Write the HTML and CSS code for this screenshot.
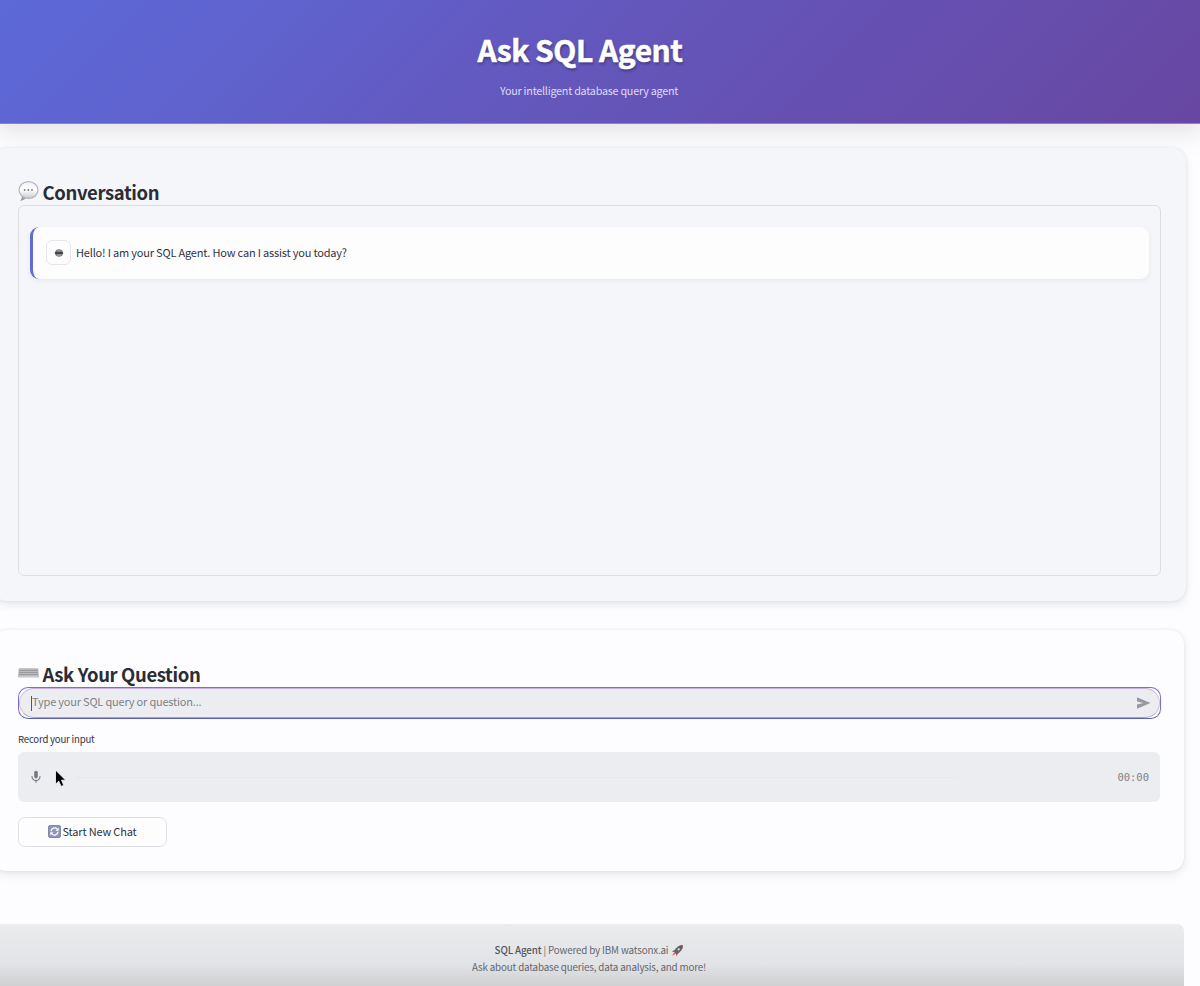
FILE: index.html
```html
<!DOCTYPE html>
<html lang="en">
<head>
<meta charset="utf-8">
<title>Ask SQL Agent</title>
<link rel="stylesheet" href="styles.css">
</head>
<body>
<header class="hero">
  <h1 class="hero-title"><span>Ask SQL Agent</span></h1>
  <p class="hero-sub"><span>Your intelligent database query agent</span></p>
</header>
<main class="page">
  <section class="panel conversation">
    <h2 class="heading">
      <svg class="heading-icon" viewBox="0 0 21 21">
        <defs><linearGradient id="bub" x1="0" y1="0" x2="0" y2="1"><stop offset="0" stop-color="#f1f1f3"/><stop offset=".5" stop-color="#fff"/><stop offset="1" stop-color="#c9c9cd"/></linearGradient></defs>
        <path d="M4 14.500c.1 2.200-.7 4-1.900 5.400 2.600-.1 4.900-1.300 6.100-3.300Z" fill="#98989d"/>
        <ellipse cx="10.500" cy="9" rx="9.500" ry="8.400" fill="url(#bub)" stroke="#b4b4b9" stroke-width="1.200"/>
        <g fill="#77777c"><circle cx="6.600" cy="9" r=".9"/><circle cx="10.300" cy="9" r=".9"/><circle cx="14" cy="9" r=".9"/></g>
      </svg>
      <span>Conversation</span>
    </h2>
    <div class="chat">
      <div class="message">
        <div class="avatar">
          <svg width="10" height="8" viewBox="0 0 10 8"><ellipse cx="5" cy="4" rx="3.900" ry="3.700" fill="#77787e"/><path d="M.9 3.200h8.200v1.700H.9Z" fill="#3b3c42"/><path d="M3 5.600h4v.9H3Z" fill="#b8b8bd"/><path d="M3.200 1.700h3.600" stroke="#a7a7ac" stroke-width=".8"/></svg>
        </div>
        <p class="message-text">Hello! I am your SQL Agent. How can I assist you today?</p>
      </div>
    </div>
  </section>
  <section class="panel ask">
    <h2 class="heading">
      <svg class="heading-icon" viewBox="0 0 21 21">
        <path d="M1.200 5.800h18.600l.6 8.200H.6Z" fill="#bcbcbf" stroke="#a4a4a8" stroke-width=".7"/>
        <path d="M1.600 7.500h17.800M1.400 9.500h18.200M1.200 11.500h18.600" stroke="#929296" stroke-width=".8"/>
        <path d="M1 13.500h19" stroke="#cdcdd0" stroke-width=".9"/>
      </svg>
      <span>Ask Your Question</span>
    </h2>
    <div class="prompt">
      <div class="prompt-field">
        <i class="caret"></i>
        <span class="placeholder">Type your SQL query or question...</span>
        <svg class="send" width="15" height="12" viewBox="0 0 15 12"><path d="M1 .3 14.500 6 1 11.700V7.400L7.500 6 1 4.600Z" fill="#97989e"/></svg>
      </div>
    </div>
    <p class="label">Record your input</p>
    <div class="recorder">
      <svg class="mic" width="10" height="14" viewBox="0 0 10 14"><rect x="3.200" y=".8" width="3.600" height="7.600" rx="1.800" fill="#77787d"/><path d="M1 6.200v.4a4 4 0 0 0 8 0v-.4M5 10.600v2.200" fill="none" stroke="#77787d" stroke-width="1.200"/></svg>
      <svg class="pointer" width="13" height="19" viewBox="0 0 13 19"><path d="M1.500 1v14.200l3.300-3 2.300 5.300 2.700-1.200-2.300-5.100h4.200Z" fill="#000" stroke="#fff" stroke-width=".8"/></svg>
      <i class="wave"></i>
      <span class="time">00:00</span>
    </div>
    <button class="new-chat">
      <svg width="13" height="13" viewBox="0 0 13 13"><rect x=".4" y=".4" width="12.200" height="12.200" rx="2" fill="#8d95bb" stroke="#686e8e" stroke-width=".8"/><path d="M3 6.300a3.600 3.600 0 0 1 6.200-2.200M10 6.700a3.600 3.600 0 0 1-6.200 2.200" fill="none" stroke="#fff" stroke-width="1.300"/><path d="M10.700 2.600v3.200H7.500ZM2.300 10.400V7.200h3.200Z" fill="#fff"/></svg>
      <span>Start New Chat</span>
    </button>
  </section>
  <footer class="footer">
    <p class="foot-line foot-first"><span><b>SQL Agent</b> | Powered by IBM watsonx.ai</span>
      <svg width="12" height="12" viewBox="0 0 12 12"><path d="M3.400 5 .8 6.600l2.600.4ZM7 8.600l-1.600 2.800L5 8.600Z" fill="#d9444b"/><path d="M11.500.5C8.200.4 5.300 2.200 3 6.500L5.500 9C9.800 6.800 11.600 3.800 11.500.5Z" fill="#62656e" stroke="#45474f" stroke-width=".5"/><path d="M11.500.5 8.600.9l2.500 2.500Z" fill="#963c46"/><circle cx="7.700" cy="4.300" r="1.100" fill="#d7e3ee"/><path d="M3.300 7.300.9 11.100l3.800-2.400Z" fill="#e2574c"/></svg>
    </p>
    <p class="foot-line">Ask about database queries, data analysis, and more!</p>
  </footer>
</main>
</body>
</html>
```
FILE: styles.css
```css
* { box-sizing: border-box; }
html, body { margin: 0; height: 986px; overflow: hidden; }
body {
  background: #fdfcfe;
  color: #31333f;
  font-family: "Noto Sans CJK SC", "Open Sans", sans-serif;
}
h1, h2, p { margin: 0; }
.hero {
  height: 124px;
  padding: 28px 22px 0 0;
  text-align: center;
  background: linear-gradient(135deg, #5d69d8 0%, #5f64d0 18%, #6456bb 50%, #6847a2 100%);
  border-bottom: 1px solid #8581e0;
  box-shadow: 0 4px 24px 4px rgba(80, 70, 70, .14);
}
.hero-title {
  padding-right: 18px;
  font-size: 30px;
  line-height: 42px;
  font-weight: 700;
  letter-spacing: -.5px;
  color: #fff;
  -webkit-text-stroke: .5px #fff;
  text-shadow: 1px 2px 3px rgba(0, 0, 0, .35);
}
.hero-sub { margin-top: 11px; font-size: 10.800px; line-height: 18px; letter-spacing: -.25px; color: #dedcf7; }
.page { display: flex; flex-direction: column; margin-left: -7px; padding-top: 24px; }
.panel {
  width: 1191px;
  padding: 31px 25px 0;
  border-radius: 14px;
  box-shadow: 0 4px 9px rgba(60, 60, 75, .1), 0 0 3px rgba(60, 60, 75, .1);
}
.conversation { width: 1193px; height: 453px; background: #f4f6f9; }
.ask { height: 241px; margin-top: 29px; background: #fdfcfe; }
.heading {
  display: flex;
  align-items: center;
  gap: 3.500px;
  height: 26px;
  font-size: 18.500px;
  line-height: 26px;
  font-weight: 700;
  letter-spacing: -.38px;
  color: #2b2c34;
}
.heading-icon { width: 21px; height: 21px; margin-top: -1px; }
.chat {
  width: 1143px;
  height: 371px;
  padding: 21px 11px;
  border: 1px solid #dcdee2;
  border-radius: 6px;
}
.message {
  display: flex;
  align-items: center;
  gap: 5px;
  height: 52px;
  padding-left: 13px;
  background: #fefdfe;
  border-left: 3px solid #636bd0;
  border-radius: 9px;
  box-shadow: 0 2px 5px rgba(60, 60, 70, .07);
}
.avatar {
  display: grid;
  place-items: center;
  width: 25px;
  height: 25px;
  margin-top: -1px;
  border: 1px solid #e6e6ea;
  border-radius: 6px;
}
.message-text { margin-top: -3px; font-size: 11px; line-height: 18px; letter-spacing: -.19px; }
.prompt {
  width: 1143px;
  height: 32px;
  border: 1px solid #7571d4;
  border-bottom-color: #5c5fae;
  border-radius: 10px;
}
.prompt-field {
  display: flex;
  align-items: center;
  height: 30px;
  padding: 0 8px 0 12px;
  background: #ecedf1;
  border: 1px solid #e2bcc8;
  border-top-color: #c9b3e2;
  border-bottom-color: #a6a6cc;
  border-radius: 15px;
}
.caret { width: 1px; height: 15px; margin-left: -1px; background: #55565e; }
.placeholder { margin-top: -4px; font-size: 11px; line-height: 18px; letter-spacing: -.2px; color: #808187; }
.send { margin-left: auto; }
.label { margin-top: 12px; font-size: 9.600px; line-height: 16px; letter-spacing: -.2px; }
.recorder {
  display: flex;
  align-items: center;
  width: 1142px;
  height: 50px;
  margin-top: 5px;
  padding: 0 11px 0 13px;
  background: #ebedf1;
  border-radius: 6px;
}
.pointer { margin: 2px 0 0 13px; }
.wave { width: 880px; margin-left: 9px; border-top: 1px dotted #e2e4e9; }
.time { margin-left: auto; font: 10.500px "DejaVu Sans Mono", monospace; color: #808187; }
.new-chat {
  display: flex;
  align-items: center;
  justify-content: center;
  gap: 2px;
  width: 149px;
  height: 30px;
  margin-top: 15px;
  padding: 0 7px 2px 6px;
  border: 1px solid #e0e1e6;
  border-radius: 7px;
  background: #fefdfe;
  color: #31333f;
  font: 11px "Noto Sans CJK SC", sans-serif;
  letter-spacing: -.18px;
}
.footer {
  width: 1191px;
  height: 62px;
  margin-top: 53px;
  padding: 18px 0 0 1px;
  border-radius: 7px 7px 0 0;
  background: linear-gradient(180deg, #ebecee 0%, #e2e3e6 65%, #cfd0d2 100%);
  text-align: center;
  color: #66676d;
}
.foot-line { font-size: 9.800px; line-height: 17px; letter-spacing: -.15px; }
.foot-first { display: flex; align-items: center; justify-content: center; gap: 3px; }
.foot-first b { font-weight: 500; color: #55565c; }
```
